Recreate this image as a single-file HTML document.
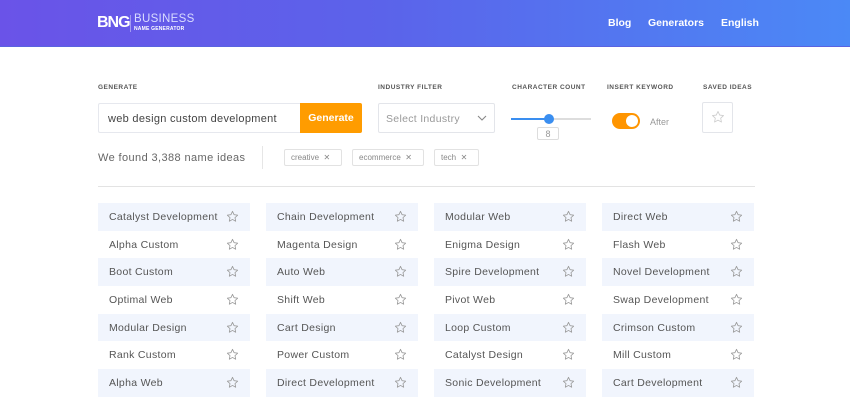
<!DOCTYPE html>
<html><head><meta charset="utf-8">
<style>
*{margin:0;padding:0;box-sizing:border-box}
body{width:850px;height:400px;overflow:hidden;background:#fff;font-family:"Liberation Sans",sans-serif;position:relative;color:#555}
.hdr{position:absolute;left:0;top:0;width:850px;height:47px;background:linear-gradient(90deg,#6a53e8 0%,#5b63ea 45%,#4b89f6 100%);border-bottom:1px solid #5a63e0}
.logo{position:absolute;left:97px;top:14px;color:#fff;font-size:16px;font-weight:bold;letter-spacing:-1px}
.sep{position:absolute;left:130px;top:15px;width:1px;height:17px;background:rgba(255,255,255,.4)}
.b1{position:absolute;left:134px;top:13px;color:#d9dcff;font-size:11.5px;letter-spacing:.3px}
.b2{position:absolute;left:134px;top:26px;color:#fff;font-size:5px;font-weight:bold;letter-spacing:.2px}
.nav{position:absolute;top:17px;color:#fff;font-size:10.5px;font-weight:bold}
.lbl{position:absolute;top:84px;font-size:6.5px;font-weight:bold;color:#555;letter-spacing:.5px}
.inp{position:absolute;left:98px;top:103px;width:202px;height:30px;border:1px solid #e6e8ee;border-right:none;border-radius:2px 0 0 2px;font-size:11px;color:#444;padding:9px 0 0 9px;letter-spacing:.3px}
.btn{position:absolute;left:300px;top:103px;width:62px;height:30px;background:#ff9c00;color:#fff;font-size:10.5px;font-weight:bold;padding-top:9px;text-align:center;border-radius:0 2px 2px 0}
.sel{position:absolute;left:378px;top:103px;width:117px;height:30px;border:1px solid #e3e5ea;border-radius:2px;font-size:10.5px;color:#999;padding:9px 0 0 7px;letter-spacing:.3px}
.track{position:absolute;left:511px;top:118px;width:80px;height:2px;background:#ddd}
.fill{position:absolute;left:511px;top:118px;width:38px;height:2px;background:#3a8ef0}
.knob{position:absolute;left:544px;top:114px;width:10px;height:10px;border-radius:50%;background:#3a8ef0}
.cnt{position:absolute;left:537px;top:127px;width:22px;height:13px;border:1px solid #ddd;border-radius:2px;font-size:9px;color:#999;text-align:center;line-height:12px}
.tog{position:absolute;left:612px;top:113px;width:28px;height:16px;border-radius:8px;background:#ff9500}
.tog i{position:absolute;right:2px;top:2px;width:12px;height:12px;border-radius:50%;background:#fff}
.aft{position:absolute;left:650px;top:117px;font-size:9px;color:#999}
.sv{position:absolute;left:702px;top:102px;width:31px;height:31px;border:1px solid #e3e5ea;border-radius:2px}
.found{position:absolute;left:98px;top:152px;font-size:11px;color:#666;letter-spacing:.4px}
.vs{position:absolute;left:262px;top:146px;width:1px;height:23px;background:#e6e6e6}
.tag{position:absolute;top:149px;height:17px;border:1px solid #e2e2e2;border-radius:2px;font-size:8px;color:#888;padding:3px 0 0 6px}
.hr{position:absolute;left:98px;top:186px;width:657px;height:1px;background:#e3e3e3}
.c{position:absolute;width:152px;height:27.5px;font-size:10.5px;color:#555;padding:8px 0 0 11px;letter-spacing:.3px}
.c.a{background:#f1f5fd}
.c svg{position:absolute;right:11px;top:7px}
</style></head><body>
<div class="hdr">
<div class="logo">BNG</div><div class="sep"></div>
<div class="b1">BUSINESS</div><div class="b2">NAME GENERATOR</div>
<div class="nav" style="left:608px">Blog</div>
<div class="nav" style="left:648px">Generators</div>
<div class="nav" style="left:721px">English</div>
</div>
<div class="lbl" style="left:98px">GENERATE</div>
<div class="lbl" style="left:378px">INDUSTRY FILTER</div>
<div class="lbl" style="left:512px">CHARACTER COUNT</div>
<div class="lbl" style="left:607px">INSERT KEYWORD</div>
<div class="lbl" style="left:703px">SAVED IDEAS</div>
<div class="inp">web design custom development</div>
<div class="btn">Generate</div>
<div class="sel">Select Industry<svg style="position:absolute;right:7px;top:11px" width="10" height="6" viewBox="0 0 10 6"><path d="M1 1l4 4 4-4" fill="none" stroke="#888" stroke-width="1.1"/></svg></div>
<div class="track"></div><div class="fill"></div><div class="knob"></div><div class="cnt">8</div>
<div class="tog"><i></i></div><div class="aft">After</div>
<div class="sv"><svg style="position:absolute;left:8px;top:7px" width="14" height="14" viewBox="0 0 24 24"><path d="M12 2.5l2.9 6.2 6.6.8-4.9 4.6 1.3 6.6L12 17.4l-5.9 3.3 1.3-6.6-4.9-4.6 6.6-.8z" fill="none" stroke="#ccc" stroke-width="1.4" stroke-linejoin="round"/></svg></div>
<div class="found">We found 3,388 name ideas</div>
<div class="vs"></div>
<div class="tag" style="left:284px;width:58px">creative &nbsp;✕</div>
<div class="tag" style="left:352px;width:72px">ecommerce &nbsp;✕</div>
<div class="tag" style="left:434px;width:45px">tech &nbsp;✕</div>
<div class="hr"></div>
<div id="g"></div>
<script>
var d=[["Catalyst Development","Chain Development","Modular Web","Direct Web"],["Alpha Custom","Magenta Design","Enigma Design","Flash Web"],["Boot Custom","Auto Web","Spire Development","Novel Development"],["Optimal Web","Shift Web","Pivot Web","Swap Development"],["Modular Design","Cart Design","Loop Custom","Crimson Custom"],["Rank Custom","Power Custom","Catalyst Design","Mill Custom"],["Alpha Web","Direct Development","Sonic Development","Cart Development"]];
var s='<svg width="13" height="13" viewBox="0 0 24 24"><path d="M12 2.5l2.9 6.2 6.6.8-4.9 4.6 1.3 6.6L12 17.4l-5.9 3.3 1.3-6.6-4.9-4.6 6.6-.8z" fill="none" stroke="#999" stroke-width="1.5" stroke-linejoin="round"/></svg>';
var h='';for(var r=0;r<7;r++)for(var c=0;c<4;c++){h+='<div class="c'+(r%2==0?' a':'')+'" style="left:'+(98+c*168)+'px;top:'+(203+r*27.67)+'px">'+d[r][c]+s+'</div>';}
document.getElementById('g').innerHTML=h;
</script>
</body></html>
